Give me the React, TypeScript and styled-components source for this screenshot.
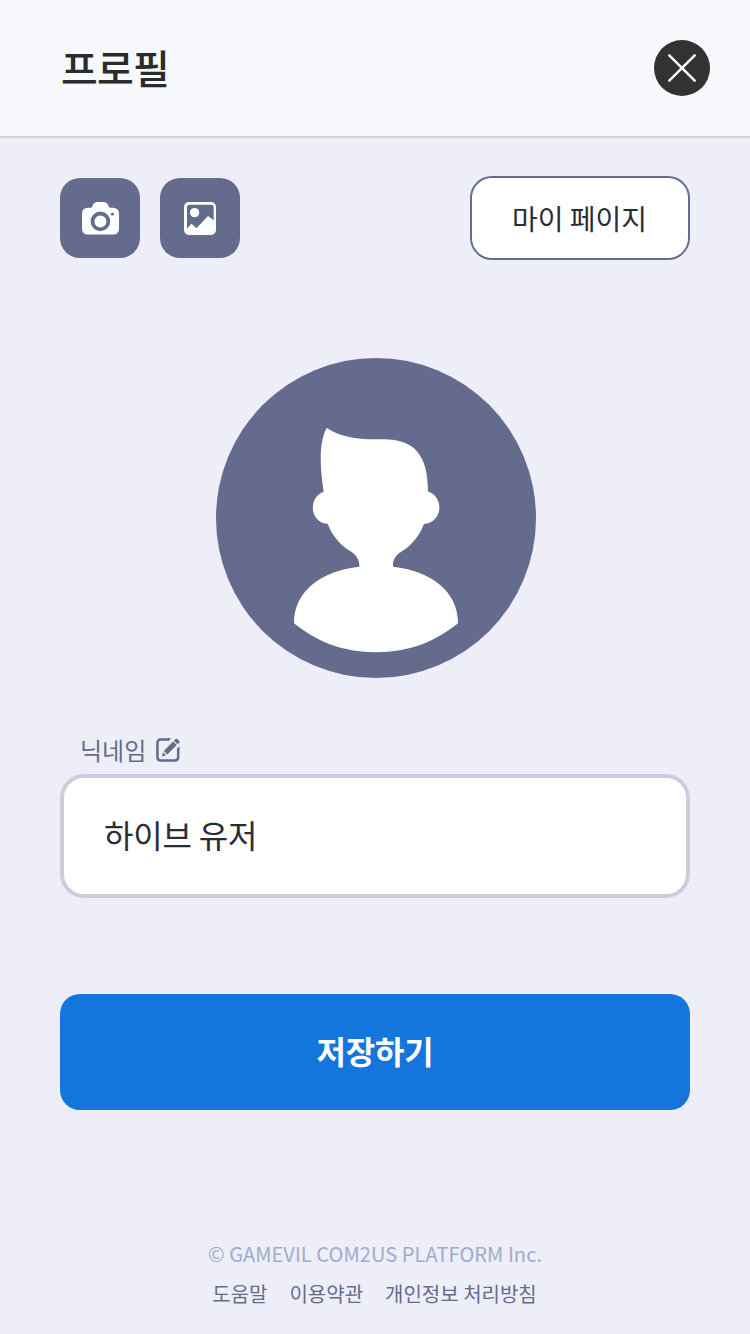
import React from "react";
import styled, { createGlobalStyle } from "styled-components";

const GlobalStyle = createGlobalStyle`
  * { box-sizing: border-box; }
  body {
    margin: 0;
    background: #edeef7;
    font-family: "Noto Sans CJK KR", "Noto Sans", sans-serif;
    color: #2a2a2e;
  }
  button, input { font: inherit; color: inherit; margin: 0; }
`;

const Page = styled.div`
  height: 1334px;
  display: flex;
  flex-direction: column;
  background: #edeef7;
`;

const Header = styled.header`
  height: 138px;
  flex: none;
  display: flex;
  align-items: center;
  justify-content: space-between;
  padding: 0 40px 0 60px;
  background: #f7f8fc;
  border-bottom: 2px solid #d2d3df;
`;

const Title = styled.h1`
  margin: 0;
  padding: 0 0 2px 1px;
  font-size: 40px;
  line-height: 60px;
  font-weight: 500;
  letter-spacing: -0.8px;
  color: #2b2b2b;
`;

const CloseButton = styled.button`
  width: 56px;
  height: 56px;
  padding: 0;
  border: 0;
  border-radius: 50%;
  background: #313332;
  svg { display: block; }
`;

const Main = styled.main`
  flex: 1;
  display: flex;
  flex-direction: column;
  padding: 38px 60px 0;
`;

const Toolbar = styled.div`
  display: flex;
  align-items: center;
  gap: 20px;
  height: 84px;
`;

const IconButton = styled.button`
  width: 80px;
  height: 80px;
  padding: 0;
  border: 0;
  border-radius: 20px;
  background: #656b8d;
  svg { display: block; }
`;

const MyPageButton = styled.button`
  width: 220px;
  height: 84px;
  margin-left: auto;
  padding: 0 1px 0 0;
  border: 2px solid #656b8d;
  border-radius: 22px;
  background: #fff;
  color: #2a2d35;
  font-size: 28px;
  line-height: 40px;
`;

const Avatar = styled.div`
  width: 320px;
  height: 320px;
  margin: 98px 0 0 156px;
  border-radius: 50%;
  background: #656b8d;
  svg { display: block; }
`;

const FieldLabel = styled.label`
  display: flex;
  align-items: center;
  gap: 10px;
  height: 36px;
  margin: 54px 0 0 20px;
  font-size: 24px;
  line-height: 36px;
  color: #656b8d;
`;

const NameInput = styled.input`
  width: 630px;
  height: 124px;
  margin-top: 6px;
  padding: 0 40px 4px;
  border: 4px solid #cccce0;
  border-radius: 24px;
  outline: 0;
  background: #fff;
  color: #2a2d35;
  font-size: 32px;
  letter-spacing: -0.2px;
`;

const SaveButton = styled.button`
  height: 116px;
  margin-top: 96px;
  padding: 0 0 4px;
  border: 0;
  border-radius: 20px;
  background: #1475dc;
  color: #fff;
  font-size: 32px;
  font-weight: 700;
  letter-spacing: -0.2px;
`;

const Footer = styled.footer`
  display: flex;
  flex-direction: column;
  align-items: center;
  height: 100px;
  font-size: 20px;
  line-height: 40px;
`;

const Copyright = styled.div`
  color: #a0abcd;
  letter-spacing: 0.07px;
`;

const Links = styled.nav`
  display: flex;
  gap: 22px;
  padding-right: 1px;
  color: #656b8d;
`;

export default function App() {
  return (
    <Page>
      <GlobalStyle />
      <Header>
        <Title>프로필</Title>
        <CloseButton aria-label="닫기">
          <svg width="56" height="56" viewBox="0 0 56 56">
            <path d="M15.3 15.3 40.7 40.7M40.7 15.3 15.3 40.7" stroke="#fff" strokeWidth="2.5" strokeLinecap="round" />
          </svg>
        </CloseButton>
      </Header>
      <Main>
        <Toolbar>
          <IconButton aria-label="카메라">
            <svg width="80" height="80" viewBox="0 0 80 80">
              <path
                fill="#fff"
                d="M28 29.7H30.5Q32 29.7 32.4 28.2Q33.6 24 38 24H43Q47.400 24 48.600 28.200Q49 29.700 50.500 29.700H53Q59 29.700 59 35.700V50.500Q59 56.500 53 56.500H28Q22 56.500 22 50.500V35.700Q22 29.700 28 29.700Z"
              />
              <circle cx="40.4" cy="43.4" r="7.9" fill="none" stroke="#656b8d" strokeWidth="3.8" />
              <circle cx="52.4" cy="36" r="1.6" fill="#656b8d" />
            </svg>
          </IconButton>
          <IconButton aria-label="앨범">
            <svg width="80" height="80" viewBox="0 0 80 80">
              <rect x="24" y="24" width="32" height="33" rx="5" fill="#fff" />
              <path
                fill="#656b8d"
                d="M29.7 26.8H51Q53.7 26.8 53.7 29.5V42.3L48 38 36.5 50.3 31.5 45.8 27 50.7V29.5Q27 26.8 29.7 26.8Z"
              />
              <circle cx="34.6" cy="34.6" r="4.7" fill="#fff" />
            </svg>
          </IconButton>
          <MyPageButton>마이 페이지</MyPageButton>
        </Toolbar>
        <Avatar>
          <svg width="320" height="320" viewBox="0 0 320 320">
            <path
              fill="#fff"
              d="M110.7 70C124 79 143 81.8 164 81.2C197 80 212 95 212 133.5C218.800 135.500 223.400 142 223.400 149.700C223.400 158.500 216.800 165.700 208 165.800C204 177 196 187 186.7 192.8C179.5 197 176.3 202.5 177 208.7C215 212.5 242.5 234 242 265.3C220 283 194 294.3 160 294.3C126 294.3 100 283 78 265.3C77.5 234 105 212.5 143.3 208.7C143.9 202.5 140.5 196.5 133.3 192.5C124 187 115.5 176.5 111.7 165.800C103 165.700 96.800 158.500 96.800 149.700C96.800 142 101.500 135.700 107.700 133.700C104 110 102.500 85 110.700 70Z"
            />
          </svg>
        </Avatar>
        <FieldLabel htmlFor="nickname">
          닉네임
          <svg width="24" height="24" viewBox="0 0 24 24">
            <path
              d="M13.2 1.5H5Q1.4 1.5 1.400 5.100V19Q1.400 22.600 5 22.600H18.600Q22.200 22.600 22.200 19V10.500"
              fill="none"
              stroke="#656b8d"
              strokeWidth="2.5"
            />
            <path fill="#656b8d" d="M12 0.300H15.200L12.600 2.800H12ZM20.950 11.500V10.800L23.450 8.300V11.500Z" />
            <path fill="#656b8d" d="M7.700 13 17.100 3.400 20.800 7 11.300 16.500ZM7 14.200 10.100 17.200 6 18.400Z" />
            <path fill="#656b8d" d="M17.800 2.700 19.600 0.900Q20.400 0.200 21.200 0.900L23.300 3Q24 3.800 23.300 4.600L21.500 6.300Z" />
          </svg>
        </FieldLabel>
        <NameInput id="nickname" defaultValue="하이브 유저" />
        <SaveButton>저장하기</SaveButton>
      </Main>
      <Footer>
        <Copyright>© GAMEVIL COM2US PLATFORM Inc.</Copyright>
        <Links>
          <span>도움말</span>
          <span>이용약관</span>
          <span>개인정보 처리방침</span>
        </Links>
      </Footer>
    </Page>
  );
}
